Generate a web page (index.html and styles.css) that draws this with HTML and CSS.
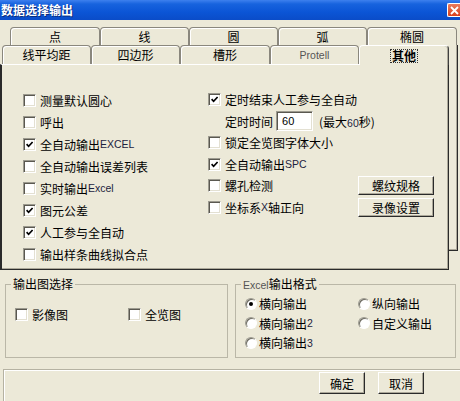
FILE: index.html
```html
<!DOCTYPE html>
<html lang="zh-CN">
<head>
<meta charset="utf-8">
<title>数据选择输出</title>
<link rel="stylesheet" href="styles.css">
</head>
<body>
<div class="win">
  <div class="titlebar">
    <span class="title">数据选择输出</span>
    <span class="close"><svg width="9" height="9" viewBox="0 0 9 9"><path d="M1 1 L8 8 M8 1 L1 8" stroke="#fff" stroke-width="1.8"/></svg></span>
  </div>

  <div class="tabs">
    <div class="row1">
      <div class="tab w90">点</div>
      <div class="tab w89">线</div>
      <div class="tab w89">圆</div>
      <div class="tab w89">弧</div>
      <div class="tab w90">椭圆</div>
    </div>
    <div class="tabbody">
      <div class="main">
        <div class="row2">
          <div class="tab w89">线平均距</div>
          <div class="tab w89">四边形</div>
          <div class="tab w90">槽形</div>
          <div class="tab w89"><span class="en gray">Protell</span></div>
          <div class="tab sel w90"><span class="focus">其他</span></div>
        </div>
        <div class="panel">
          <div class="col-left">
            <div class="opt"><span class="cb"></span>测量默认圆心</div>
            <div class="opt"><span class="cb"></span>呼出</div>
            <div class="opt"><span class="cb"><svg class="ck" width="7" height="7" viewBox="0 0 7 7"><polyline points="0.6,3.2 2.6,5.3 6.6,1" fill="none" stroke="#000" stroke-width="1.7"/></svg></span>全自动输出<span class="en">EXCEL</span></div>
            <div class="opt"><span class="cb"></span>全自动输出误差列表</div>
            <div class="opt"><span class="cb"></span>实时输出<span class="en">Excel</span></div>
            <div class="opt"><span class="cb"><svg class="ck" width="7" height="7" viewBox="0 0 7 7"><polyline points="0.6,3.2 2.6,5.3 6.6,1" fill="none" stroke="#000" stroke-width="1.7"/></svg></span>图元公差</div>
            <div class="opt"><span class="cb"><svg class="ck" width="7" height="7" viewBox="0 0 7 7"><polyline points="0.6,3.2 2.6,5.3 6.6,1" fill="none" stroke="#000" stroke-width="1.7"/></svg></span>人工参与全自动</div>
            <div class="opt"><span class="cb"></span>输出样条曲线拟合点</div>
          </div>
          <div class="col-right">
            <div class="opt r"><span class="cb"><svg class="ck" width="7" height="7" viewBox="0 0 7 7"><polyline points="0.6,3.2 2.6,5.3 6.6,1" fill="none" stroke="#000" stroke-width="1.7"/></svg></span>定时结束人工参与全自动</div>
            <div class="opt r indent">定时时间<span class="field"><span class="en">60</span></span><span class="hint">(最大<span class="en">60</span>秒)</span></div>
            <div class="opt r"><span class="cb"></span>锁定全览图字体大小</div>
            <div class="opt r"><span class="cb"><svg class="ck" width="7" height="7" viewBox="0 0 7 7"><polyline points="0.6,3.2 2.6,5.3 6.6,1" fill="none" stroke="#000" stroke-width="1.7"/></svg></span>全自动输出<span class="en">SPC</span></div>
            <div class="opt r"><span class="cb"></span>螺孔检测<span class="btn wide">螺纹规格</span></div>
            <div class="opt r"><span class="cb"></span>坐标系<span class="en">X</span>轴正向<span class="btn wide">录像设置</span></div>
          </div>
        </div>
      </div>
      <div class="backedge"></div>
    </div>
  </div>

  <div class="groups">
    <fieldset class="grp g-left">
      <legend>输出图选择</legend>
      <div class="grp-body two">
        <div class="opt"><span class="cb"></span>影像图</div>
        <div class="opt"><span class="cb"></span>全览图</div>
      </div>
    </fieldset>
    <fieldset class="grp g-right">
      <legend><span class="en gray">Excel</span>输出格式</legend>
      <div class="grp-body radios">
        <div class="ropt"><span class="rb on"></span>横向输出</div>
        <div class="ropt"><span class="rb"></span>纵向输出</div>
        <div class="ropt"><span class="rb"></span>横向输出<span class="en">2</span></div>
        <div class="ropt"><span class="rb"></span>自定义输出</div>
        <div class="ropt"><span class="rb"></span>横向输出<span class="en">3</span></div>
      </div>
    </fieldset>
  </div>

  <div class="footer">
    <span class="btn ok">确定</span>
    <span class="btn ok">取消</span>
  </div>
</div>
</body>
</html>
```

FILE: styles.css
```css
* { box-sizing: border-box; }
html, body { margin: 0; padding: 0; }
body {
  width: 460px;
  height: 401px;
  overflow: hidden;
  background: #ECE9D8;
  font-family: "Noto Sans CJK SC", "Noto Sans", sans-serif;
  font-size: 12px;
  color: #000;
}
.win { display: flex; flex-direction: column; height: 401px; }

.en { font-family: "Liberation Sans", "DejaVu Sans", sans-serif; font-size: 10.5px; color: #1c2340; }
.gray { color: #555; }

/* title bar */
.titlebar {
  height: 20px;
  flex: none;
  display: flex;
  align-items: center;
  justify-content: space-between;
  background: linear-gradient(#3D80EE 0%, #1763DE 20%, #0B55D6 60%, #0A4CC8 100%);
}
.title {
  color: #fff;
  font-weight: bold;
  font-size: 12px;
  line-height: 20px;
  padding-left: 1px;
  text-shadow: 1px 1px 0 #0B2C7A;
}
.close {
  width: 13px;
  height: 14px;
  margin-right: 0;
  display: flex;
  align-items: center;
  justify-content: center;
  background: linear-gradient(#EB7C5E, #D8401C);
  border: 1px solid #fff;
  border-right: none;
  border-radius: 2px 0 0 2px;
}

/* tabs */
.tabs { margin-top: 7px; flex: none; }
.row1 { display: flex; padding-left: 10px; height: 18px; }
.tab {
  height: 100%;
  flex: none;
  display: flex;
  align-items: center;
  justify-content: center;
  border: 1px solid #8A877D;
  border-bottom: none;
  border-radius: 4px 4px 0 0;
  box-shadow: inset 1px 1px 0 #fff;
  line-height: 14px;
}
.w89 { width: 89px; }
.w90 { width: 90px; }
.tabbody { display: flex; align-items: flex-start; }
.main { width: 449px; flex: none; }
.row2 { display: flex; padding-left: 2px; height: 19px; align-items: flex-end; }
.row2 .tab { height: 19px; }
.tab.sel {
  height: 20px;
  margin-bottom: -1px;
  position: relative;
  z-index: 1;
  background: #ECE9D8;
  border-color: #fff #404040 transparent #fff;
  box-shadow: inset -1px 0 0 #ACA899;
  font-weight: bold;
}
.focus { border: 1px dotted #333; padding: 0 1px; line-height: 12px; }
.backedge {
  width: 9px;
  height: 206px;
  flex: none;
  border-right: 1px solid #2A2A2A;
  border-bottom: 1px solid #2A2A2A;
  box-shadow: inset -1px -1px 0 #ACA899;
}

/* panel */
.panel {
  height: 206px;
  display: grid;
  grid-template-columns: 185px 226px;
  align-content: start;
  padding: 24px 0 0 21px;
  border-left: 2px solid #2A2A2A;
  border-top: 1px solid #fff;
  border-right: 1px solid #2A2A2A;
  border-bottom: 1px solid #2A2A2A;
  box-shadow: inset -1px -1px 0 #ACA899;
}
.opt { display: flex; align-items: center; height: 22px; white-space: nowrap; }
.opt.r { height: 21.5px; }
.opt.indent { padding-left: 17px; }
.cb {
  width: 13px;
  height: 13px;
  flex: none;
  margin-right: 4px;
  background: #fff;
  border: 1px solid;
  border-color: #9C9A8F #fff #fff #9C9A8F;
  box-shadow: inset 1px 1px 0 #5A5850, inset -1px -1px 0 #E3E0D2;
  display: flex;
  align-items: center;
  justify-content: center;
}
.ck { display: block; }
.field {
  width: 37px;
  height: 20px;
  margin-left: 3px;
  background: #fff;
  border: 1px solid;
  border-color: #9C9A8F #fff #fff #9C9A8F;
  box-shadow: inset 1px 1px 0 #5A5850, inset -1px -1px 0 #E3E0D2;
  display: flex;
  align-items: center;
  padding-left: 5px;
}
.field .en { color: #000; font-size: 11px; }
.hint { margin-left: 6px; }
.btn {
  display: flex;
  align-items: center;
  justify-content: center;
  background: #ECE9D8;
  border: 1px solid;
  border-color: #fff #2A2A2A #2A2A2A #fff;
  box-shadow: inset -1px -1px 0 #ACA899;
  flex: none;
}
.btn.wide { width: 76px; height: 19px; margin-left: auto; }

/* group boxes */
.groups { display: flex; gap: 7px; padding-left: 5px; margin-top: 7px; flex: none; }
.grp {
  margin: 0;
  padding: 0;
  height: 81px;
  border: 1px solid #BAB7A7;
  min-width: 0;
}
.grp legend { margin-left: 5px; padding: 0 2px; line-height: 14px; }
.g-left { width: 223px; }
.g-right { width: 221px; }
.grp-body.two {
  display: grid;
  grid-template-columns: 113px 100px;
  padding: 13px 0 0 9px;
}
.grp-body.two .opt { height: 20px; }
.grp-body.radios {
  display: grid;
  grid-template-columns: 113px 100px;
  padding: 2px 0 0 9px;
}
.ropt { display: flex; align-items: center; height: 19.5px; white-space: nowrap; }
.rb {
  width: 12px;
  height: 12px;
  flex: none;
  margin-right: 2px;
  border-radius: 50%;
  background: #fff;
  border: 1px solid;
  border-color: #9C9A8F #fff #fff #9C9A8F;
  box-shadow: inset 1px 1px 0 #6E6C62;
  display: flex;
  align-items: center;
  justify-content: center;
}
.rb.on::after {
  content: "";
  width: 4px;
  height: 4px;
  border-radius: 50%;
  background: #000;
}

/* footer */
.footer {
  margin-top: 11px;
  margin-left: 3px;
  flex: 1;
  border: 1px solid #B5B2A2;
  border-right: none;
  border-bottom: none;
  box-shadow: inset 1px 1px 0 #fff;
  display: flex;
  justify-content: flex-end;
  align-items: flex-start;
  gap: 13px;
  padding: 2px 36px 0 0;
}
.btn.ok { width: 46px; height: 22px; }
```
